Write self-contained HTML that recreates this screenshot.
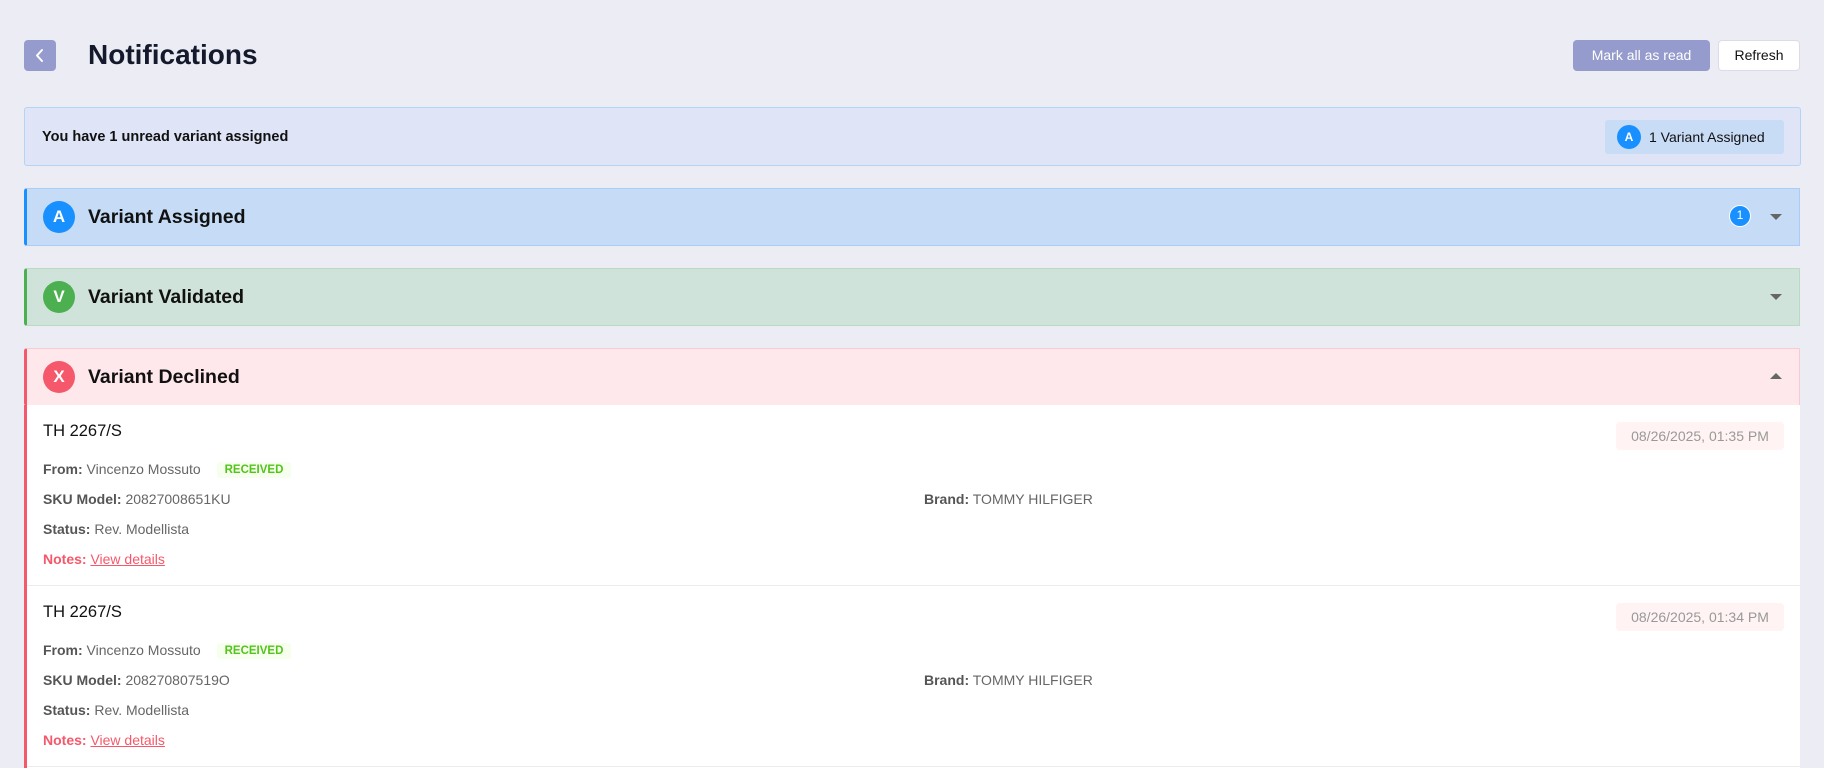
<!DOCTYPE html>
<html><head><meta charset="utf-8"><style>
*{box-sizing:border-box;margin:0;padding:0}
body{width:1824px;height:768px;overflow:hidden;background:#ececf5;font-family:"Liberation Sans",Arial,sans-serif;color:#111;position:relative}
.abs{position:absolute}
.back{left:24px;top:40px;width:32px;height:31px;background:#959bcc;border-radius:4px;}
.title{left:88px;top:38px;font-size:28px;font-weight:700;color:#141a2b;line-height:34px}
.btn1{left:1573px;top:40px;width:137px;height:31px;background:#959bcc;border-radius:4px;color:#fff;font-size:14px;line-height:31px;text-align:center}
.btn2{left:1718px;top:40px;width:82px;height:31px;background:#fff;border:1px solid #dcdce8;border-radius:4px;color:#111;font-size:14px;line-height:29px;text-align:center}
.banner{left:24px;top:107px;width:1777px;height:59px;background:#dfe5f7;border:1px solid #b3d3f7;border-radius:3px}
.banner .t{position:absolute;left:17px;top:21px;font-size:14.5px;font-weight:700;color:#111}
.pill{position:absolute;left:1580px;top:12px;width:179px;height:34px;background:#c9dcf6;border-radius:3px}
.pill .c{position:absolute;left:12px;top:5px;width:24px;height:24px;border-radius:50%;background:#1890ff;color:#fff;font-size:12px;font-weight:700;text-align:center;line-height:24px}
.pill .l{position:absolute;left:44px;top:9px;font-size:14px;color:#111}
.sec{left:24px;width:1776px;height:58px;border:1px solid;border-left-width:3px;border-radius:3px 0 0 3px}
.sec .c{position:absolute;left:16px;top:12px;width:32px;height:32px;border-radius:50%;color:#fff;font-size:17px;font-weight:700;text-align:center;line-height:32px}
.sec .h{position:absolute;left:61px;top:17px;font-size:19.5px;font-weight:700;color:#111}
.caret{position:absolute;left:1743px;top:25px;width:0;height:0;border-left:6px solid transparent;border-right:6px solid transparent}
.down{border-top:6px solid #666}
.up{border-bottom:6px solid #666}
.badge{position:absolute;left:1702px;top:16px;width:22px;height:22px;border-radius:50%;background:#1890ff;border:1.5px solid #fff;color:#fff;font-size:12px;text-align:center;line-height:19px}
.body{left:24px;top:405px;width:1776px;height:363px;background:#fff;border-left:3px solid #f5586a}
.item{position:absolute;left:0;width:1773px;height:181px;border-bottom:1px solid #ececec}
.item .nm{position:absolute;left:16px;top:17px;font-size:16.5px;color:#111}
.item .date{position:absolute;left:1589px;top:17px;width:168px;height:28px;background:#fff3f3;border-radius:4px;color:#999;font-size:14px;line-height:28px;text-align:center}
.row{position:absolute;font-size:14px;color:#666}
.row b{color:#555}
.rec{display:inline-block;margin-left:12px;background:#f6ffed;color:#52c41a;font-size:11.5px;font-weight:700;padding:2px 8px;border-radius:3px;vertical-align:1px}
.notes{color:#f5586a}.notes b{color:#f5586a}.notes u{color:#f5586a}
</style></head><body>
<div class="abs back"><svg width="32" height="31"><path d="M18 10l-5 5.5 5 5.5" fill="none" stroke="#fff" stroke-width="2" stroke-linecap="round" stroke-linejoin="round"/></svg></div>
<div class="abs title">Notifications</div>
<div class="abs btn1">Mark all as read</div>
<div class="abs btn2">Refresh</div>
<div class="abs banner"><div class="t">You have 1 unread variant assigned</div>
<div class="pill"><div class="c">A</div><div class="l">1 Variant Assigned</div></div></div>

<div class="abs sec" style="top:188px;background:#c5dbf6;border-color:#a9cdf7;border-left-color:#1890ff"><div class="c" style="background:#1890ff">A</div><div class="h">Variant Assigned</div><div class="badge">1</div><div class="caret down"></div></div>
<div class="abs sec" style="top:268px;background:#d0e3da;border-color:#b7dcbf;border-left-color:#4caf50"><div class="c" style="background:#4caf50">V</div><div class="h">Variant Validated</div><div class="caret down"></div></div>
<div class="abs sec" style="top:348px;background:#ffe8eb;border-color:#fbc9cf;border-left-color:#f5586a"><div class="c" style="background:#f5586a">X</div><div class="h">Variant Declined</div><div class="caret up" style="top:24px"></div></div>

<div class="abs body">
<div class="item" style="top:0">
<div class="nm">TH 2267/S</div><div class="date">08/26/2025, 01:35 PM</div>
<div class="row" style="left:16px;top:56px"><b>From:</b> Vincenzo Mossuto <span class="rec">RECEIVED</span></div>
<div class="row" style="left:16px;top:86px"><b>SKU Model:</b> 20827008651KU</div>
<div class="row" style="left:897px;top:86px"><b>Brand:</b> TOMMY HILFIGER</div>
<div class="row" style="left:16px;top:116px"><b>Status:</b> Rev. Modellista</div>
<div class="row notes" style="left:16px;top:146px"><b>Notes:</b> <u>View details</u></div>
</div>
<div class="item" style="top:181px">
<div class="nm">TH 2267/S</div><div class="date">08/26/2025, 01:34 PM</div>
<div class="row" style="left:16px;top:56px"><b>From:</b> Vincenzo Mossuto <span class="rec">RECEIVED</span></div>
<div class="row" style="left:16px;top:86px"><b>SKU Model:</b> 208270807519O</div>
<div class="row" style="left:897px;top:86px"><b>Brand:</b> TOMMY HILFIGER</div>
<div class="row" style="left:16px;top:116px"><b>Status:</b> Rev. Modellista</div>
<div class="row notes" style="left:16px;top:146px"><b>Notes:</b> <u>View details</u></div>
</div>
</div>
</body></html>
